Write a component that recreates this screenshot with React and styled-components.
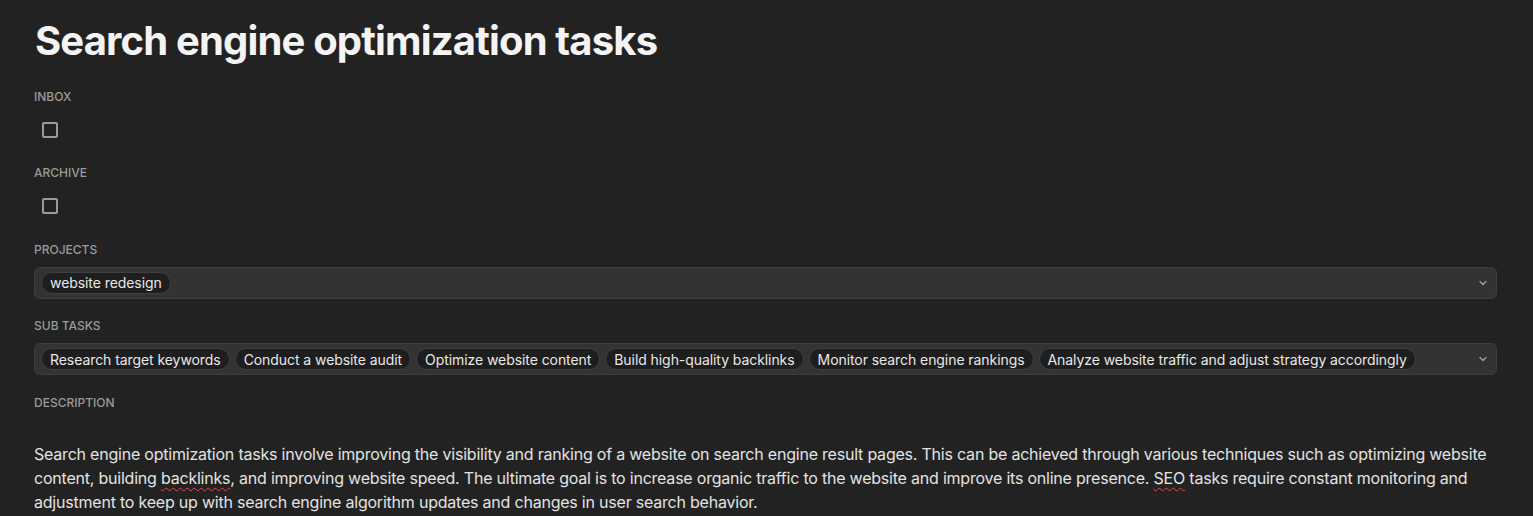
import React from "react";
import styled, { createGlobalStyle } from "styled-components";

const GlobalStyle = createGlobalStyle`
  html, body {
    margin: 0;
    padding: 0;
    background: #222222;
  }
  body {
    font-family: Inter, "Noto Sans", sans-serif;
    color: #e6e6e6;
    -webkit-font-smoothing: antialiased;
  }
`;

const Page = styled.div`
  padding: 16.5px 36px 0 34px;
  display: flex;
  flex-direction: column;
`;

const Title = styled.h1`
  margin: 0 0 24px 1px;
  font-size: 40px;
  line-height: 48px;
  font-weight: 700;
  letter-spacing: -0.021em;
  color: #f4f4f4;
`;

const Section = styled.section`
  display: flex;
  flex-direction: column;
  gap: 9px;
  margin-bottom: 19.5px;
`;

const Label = styled.div`
  font-size: 12px;
  line-height: 16px;
  font-weight: 500;
  text-transform: uppercase;
  color: #9a9a9a;
`;

const CheckRow = styled.div`
  height: 32px;
  display: flex;
  align-items: center;
  padding-left: 8px;
`;

const Check = styled.span`
  width: 12px;
  height: 12px;
  border: 2px solid #9b9b9b;
  border-radius: 2px;
`;

const Field = styled.div`
  height: 32px;
  box-sizing: border-box;
  display: flex;
  align-items: center;
  gap: 5px;
  padding: 0 6px;
  background: #333333;
  border: 1px solid #3d3d3d;
  border-radius: 6px;
`;

const Chip = styled.span`
  height: 22px;
  box-sizing: border-box;
  display: inline-flex;
  align-items: center;
  padding: 0 8px;
  border: 1px solid #3f3f3f;
  border-radius: 999px;
  background: #1e1e1e;
  font-size: 14px;
  letter-spacing: -0.005em;
  color: #e8e8e8;
  white-space: nowrap;
`;

const Chevron = styled.svg`
  margin-left: auto;
  margin-right: 2px;
  flex-shrink: 0;
`;

const Description = styled.p`
  margin: 22px 0 0;
  font-size: 16px;
  line-height: 24px;
  letter-spacing: -0.0135em;
  color: #e2e2e2;
`;

const Misspelt = styled.span`
  text-decoration: underline wavy #e0494f;
  text-decoration-thickness: 1px;
  text-underline-offset: 3px;
`;

const ChevronIcon = () => (
  <Chevron width="10" height="10" viewBox="0 0 10 10" fill="none">
    <path d="M2 3.5 L5 6.5 L8 3.5" stroke="#a0a0a0" strokeWidth="1.4" strokeLinecap="round" strokeLinejoin="round" />
  </Chevron>
);

const subTasks = [
  "Research target keywords",
  "Conduct a website audit",
  "Optimize website content",
  "Build high-quality backlinks",
  "Monitor search engine rankings",
  "Analyze website traffic and adjust strategy accordingly",
];

export default function App() {
  return (
    <>
      <GlobalStyle />
      <Page>
        <Title>Search engine optimization tasks</Title>

        <Section>
          <Label>Inbox</Label>
          <CheckRow>
            <Check />
          </CheckRow>
        </Section>

        <Section>
          <Label>Archive</Label>
          <CheckRow>
            <Check />
          </CheckRow>
        </Section>

        <Section>
          <Label>Projects</Label>
          <Field>
            <Chip>website redesign</Chip>
            <ChevronIcon />
          </Field>
        </Section>

        <Section>
          <Label>Sub tasks</Label>
          <Field>
            {subTasks.map(t => (
              <Chip key={t}>{t}</Chip>
            ))}
            <ChevronIcon />
          </Field>
        </Section>

        <Section>
          <Label>Description</Label>
          <Description>
            Search engine optimization tasks involve improving the visibility and ranking of a website on search engine
            result pages. This can be achieved through various techniques such as optimizing website content, building{" "}
            <Misspelt>backlinks</Misspelt>, and improving website speed. The ultimate goal is to increase organic traffic
            to the website and improve its online presence. <Misspelt>SEO</Misspelt> tasks require constant monitoring
            and adjustment to keep up with search engine algorithm updates and changes in user search behavior.
          </Description>
        </Section>
      </Page>
    </>
  );
}
